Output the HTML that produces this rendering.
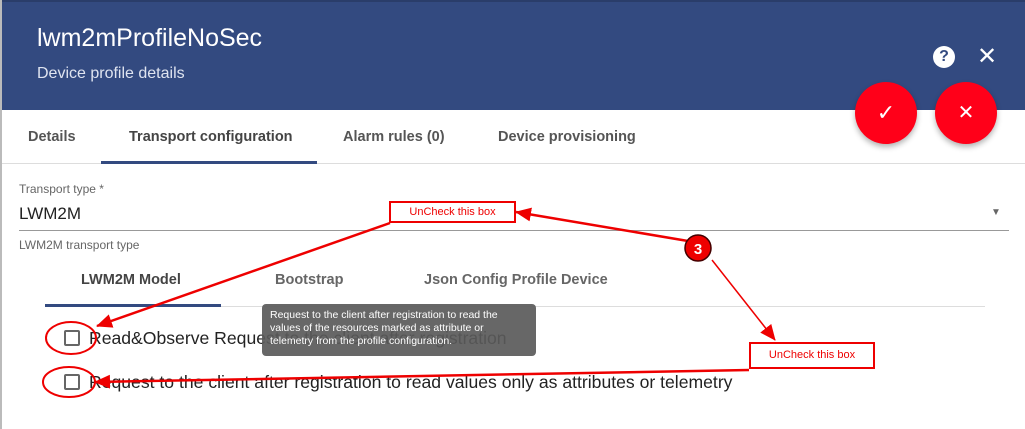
<!DOCTYPE html>
<html><head><meta charset="utf-8"><style>
*{margin:0;padding:0;box-sizing:border-box}
body{width:1025px;height:429px;overflow:hidden;background:#fff;font-family:"Liberation Sans",sans-serif;position:relative}
.a{position:absolute;white-space:nowrap}
.t{font-size:14.5px;font-weight:bold}
</style></head><body>
<div class="a" style="left:0;top:0;width:1025px;height:110px;background:#334a80;border-top:2px solid #2a3d6a"></div>
<div class="a" style="left:0;top:0;width:2px;height:429px;background:#bbb"></div>
<div class="a" style="left:37px;top:24px;font-size:25px;color:#fff">lwm2mProfileNoSec</div>
<div class="a" style="left:37px;top:65px;font-size:16px;color:#dfe4f0">Device profile details</div>
<div class="a" style="left:933px;top:46px;width:22px;height:22px;border-radius:50%;background:#fff;color:#334a80;font-weight:bold;font-size:16px;text-align:center;line-height:22px">?</div>
<div class="a" style="left:977px;top:42px;font-size:24px;color:#fff">✕</div>
<div class="a" style="left:855px;top:82px;width:62px;height:62px;border-radius:50%;background:#ff0019;box-shadow:0 3px 6px rgba(0,0,0,.3);color:#fff;font-size:22px;text-align:center;line-height:62px">✓</div>
<div class="a" style="left:935px;top:82px;width:62px;height:62px;border-radius:50%;background:#ff0019;box-shadow:0 3px 6px rgba(0,0,0,.3);color:#fff;font-size:20px;text-align:center;line-height:62px">✕</div>
<div class="a t" style="left:28px;top:129px;color:#555">Details</div>
<div class="a t" style="left:129px;top:129px;color:#444">Transport configuration</div>
<div class="a t" style="left:343px;top:129px;color:#555">Alarm rules (0)</div>
<div class="a t" style="left:498px;top:129px;color:#555">Device provisioning</div>
<div class="a" style="left:2px;top:163px;width:1023px;height:1px;background:#ddd"></div>
<div class="a" style="left:101px;top:161px;width:216px;height:3px;background:#334a80"></div>
<div class="a" style="left:19px;top:182px;font-size:12px;color:#666">Transport type *</div>
<div class="a" style="left:19px;top:204px;font-size:17px;color:#222">LWM2M</div>
<div class="a" style="left:991px;top:207px;font-size:10px;color:#666">▼</div>
<div class="a" style="left:19px;top:230px;width:990px;height:1px;background:#999"></div>
<div class="a" style="left:19px;top:238px;font-size:12px;color:#666">LWM2M transport type</div>
<div class="a t" style="left:81px;top:272px;color:#444">LWM2M Model</div>
<div class="a t" style="left:275px;top:272px;color:#666">Bootstrap</div>
<div class="a t" style="left:424px;top:272px;color:#666">Json Config Profile Device</div>
<div class="a" style="left:45px;top:306px;width:940px;height:1px;background:#ddd"></div>
<div class="a" style="left:45px;top:304px;width:176px;height:3px;background:#334a80"></div>
<div class="a" style="left:64px;top:330px;width:16px;height:16px;border:2px solid #666;border-radius:2px"></div>
<div class="a" style="left:89px;top:328px;font-size:17.6px;color:#222">Read&amp;Observe Request to the client after registration</div>
<div class="a" style="left:64px;top:374px;width:16px;height:16px;border:2px solid #666;border-radius:2px"></div>
<div class="a" style="left:89px;top:372px;font-size:17.6px;color:#222">Request to the client after registration to read values only as attributes or telemetry</div>
<div class="a" style="left:262px;top:304px;width:274px;height:52px;background:rgba(90,90,90,.92);border-radius:4px;color:#fff;font-size:10.5px;line-height:13px;padding:5px 8px;white-space:normal">Request to the client after registration to read the values of the resources marked as attribute or telemetry from the profile configuration.</div>
<div class="a" style="left:389px;top:201px;width:127px;height:22px;border:2px solid #e00;background:#fff;color:#e00;font-size:11px;text-align:center;line-height:18px">UnCheck this box</div>
<div class="a" style="left:749px;top:342px;width:126px;height:27px;border:2px solid #e00;background:#fff;color:#e00;font-size:11px;text-align:center;line-height:23px">UnCheck this box</div>
<svg class="a" style="left:0;top:0" width="1025" height="429">
<defs><marker id="m" markerWidth="16" markerHeight="14" refX="15" refY="7" orient="auto" markerUnits="userSpaceOnUse"><path d="M0,0L16,7L0,14z" fill="#e00"/></marker></defs>
<g stroke="#e00" stroke-width="2" fill="none">
<ellipse cx="71" cy="338" rx="25" ry="16"/>
<ellipse cx="69" cy="382" rx="26" ry="15"/>
<line x1="390" y1="223" x2="97" y2="326" stroke-width="2.5" marker-end="url(#m)"/>
<line x1="688" y1="241" x2="516" y2="212" stroke-width="2.5" marker-end="url(#m)"/>
<line x1="712" y1="260" x2="775" y2="340" stroke-width="1.5" marker-end="url(#m)"/>
<line x1="749" y1="370" x2="95" y2="382" stroke-width="2.5" marker-end="url(#m)"/>
</g>
<circle cx="698" cy="248" r="13" fill="#e00" stroke="#400" stroke-width="1.5"/>
<text x="698" y="254" fill="#fff" font-size="15" font-weight="bold" text-anchor="middle" font-family="Liberation Sans">3</text>
</svg>
</body></html>
